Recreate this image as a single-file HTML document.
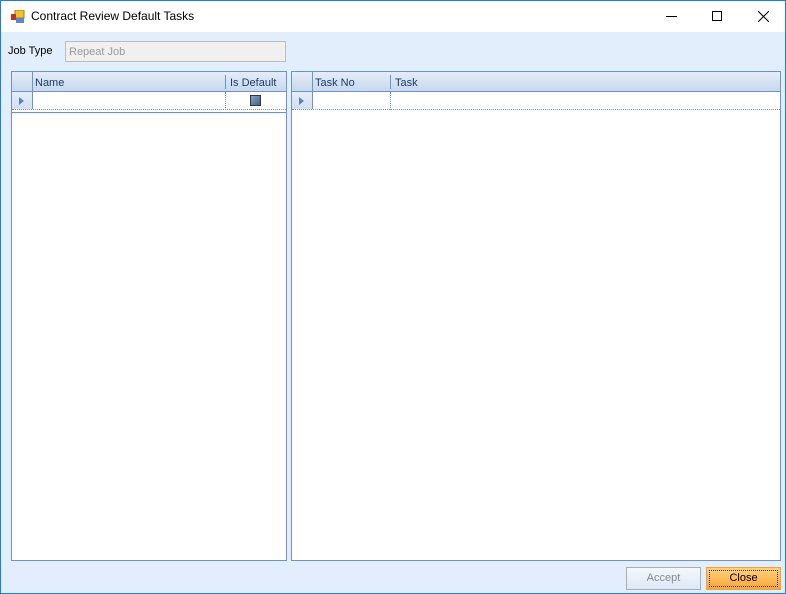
<!DOCTYPE html>
<html><head><style>
*{box-sizing:border-box;margin:0;padding:0}
body{width:786px;height:594px;overflow:hidden;font-family:"Liberation Sans",sans-serif;font-size:11px;position:relative;background:#e3eefc}
.win{position:absolute;left:0;top:0;width:786px;height:594px;border:1px solid #1a7fd6;background:#e3eefc}
.title{position:absolute;left:0;top:0;width:784px;height:31px;background:#fff}
.abs{position:absolute}
.grid{position:absolute;background:#fff;border:1px solid #6f93c9}
.hdr{position:absolute;left:0;top:0;right:0;height:20px;background:linear-gradient(#e5edf8,#c7d8ee);border-bottom:1px solid #6f93c9;color:#1e3a6e}
.row{position:absolute;left:0;top:20px;right:0;height:18px;border-bottom:1px dotted #6f93c9}
.sel{position:absolute;left:0;top:0;width:21px;height:100%;border-right:1px solid #6f93c9;background:linear-gradient(#e5edf8,#d2e0f2)}
.tri{position:absolute;left:7px;top:5px;width:0;height:0;border-left:5px solid #5b82c0;border-top:4px solid transparent;border-bottom:4px solid transparent}
</style></head><body>
<div class="win">
<div class="title">
 <svg class="abs" style="left:10px;top:9px" width="14" height="14"><rect x="4" y="0" width="9" height="8" fill="#f3c12c" stroke="#a57a10"/><rect x="0" y="4" width="5" height="6" fill="#c0302a"/><rect x="5" y="8" width="8" height="5" fill="#5b87c8"/></svg>
 <div class="abs" style="left:30px;top:8px;font-size:12px;color:#000">Contract Review Default Tasks</div>
 <div class="abs" style="left:665px;top:15px;width:11px;height:1px;background:#000"></div>
 <div class="abs" style="left:711px;top:10px;width:10px;height:10px;border:1px solid #000"></div>
 <svg class="abs" style="left:757px;top:10px" width="11" height="11"><path d="M0 0L11 11M11 0L0 11" stroke="#000"/></svg>
</div>
<div class="abs" style="left:7px;top:44px">Job Type</div>
<div class="abs" style="left:64px;top:40px;width:221px;height:21px;border:1px solid #bcbcbc;background:#f0f0f0;color:#9a9a9a;padding:4px 0 0 3px">Repeat Job</div>

<div class="grid" style="left:10px;top:70px;width:276px;height:490px">
 <div class="hdr"><div class="sel" style="background:none"></div>
  <div class="abs" style="left:23px;top:5px">Name</div>
  <div class="abs" style="left:213px;top:3px;width:1px;height:14px;background:#6f93c9"></div>
  <div class="abs" style="left:218px;top:5px">Is Default</div></div>
 <div class="row"><div class="sel"><div class="tri"></div></div>
  <div class="abs" style="left:213px;top:0;height:18px;border-left:1px dotted #6f93c9"></div>
  <div class="abs" style="left:238px;top:3px;width:11px;height:11px;border:1px solid #333;background:linear-gradient(135deg,#8aa4c8,#3f5f90)"></div></div>
 <div class="abs" style="left:0;top:40px;right:0;height:2px;border-top:1px solid #6f93c9;background:#eef3fa"></div>
</div>

<div class="grid" style="left:290px;top:70px;width:490px;height:490px">
 <div class="hdr"><div class="sel" style="background:none"></div>
  <div class="abs" style="left:23px;top:5px">Task No</div>
  <div class="abs" style="left:98px;top:3px;width:1px;height:14px;background:#6f93c9"></div>
  <div class="abs" style="left:103px;top:5px">Task</div></div>
 <div class="row"><div class="sel"><div class="tri"></div></div>
  <div class="abs" style="left:98px;top:0;height:18px;border-left:1px dotted #6f93c9"></div></div>
</div>

<div class="abs" style="left:625px;top:566px;width:75px;height:23px;border:1px solid #adadad;background:linear-gradient(#f4f8fd,#dde8f7);color:#8a8a8a;text-align:center;line-height:21px">Accept</div>
<div class="abs" style="left:705px;top:566px;width:75px;height:23px;border:1px solid #f0a23a;background:linear-gradient(#ffd27a,#fba53a);color:#000;text-align:center;line-height:21px"><div class="abs" style="left:2px;top:2px;right:2px;bottom:2px;border:1px dotted #333"></div>Close</div>
</div>
</body></html>
